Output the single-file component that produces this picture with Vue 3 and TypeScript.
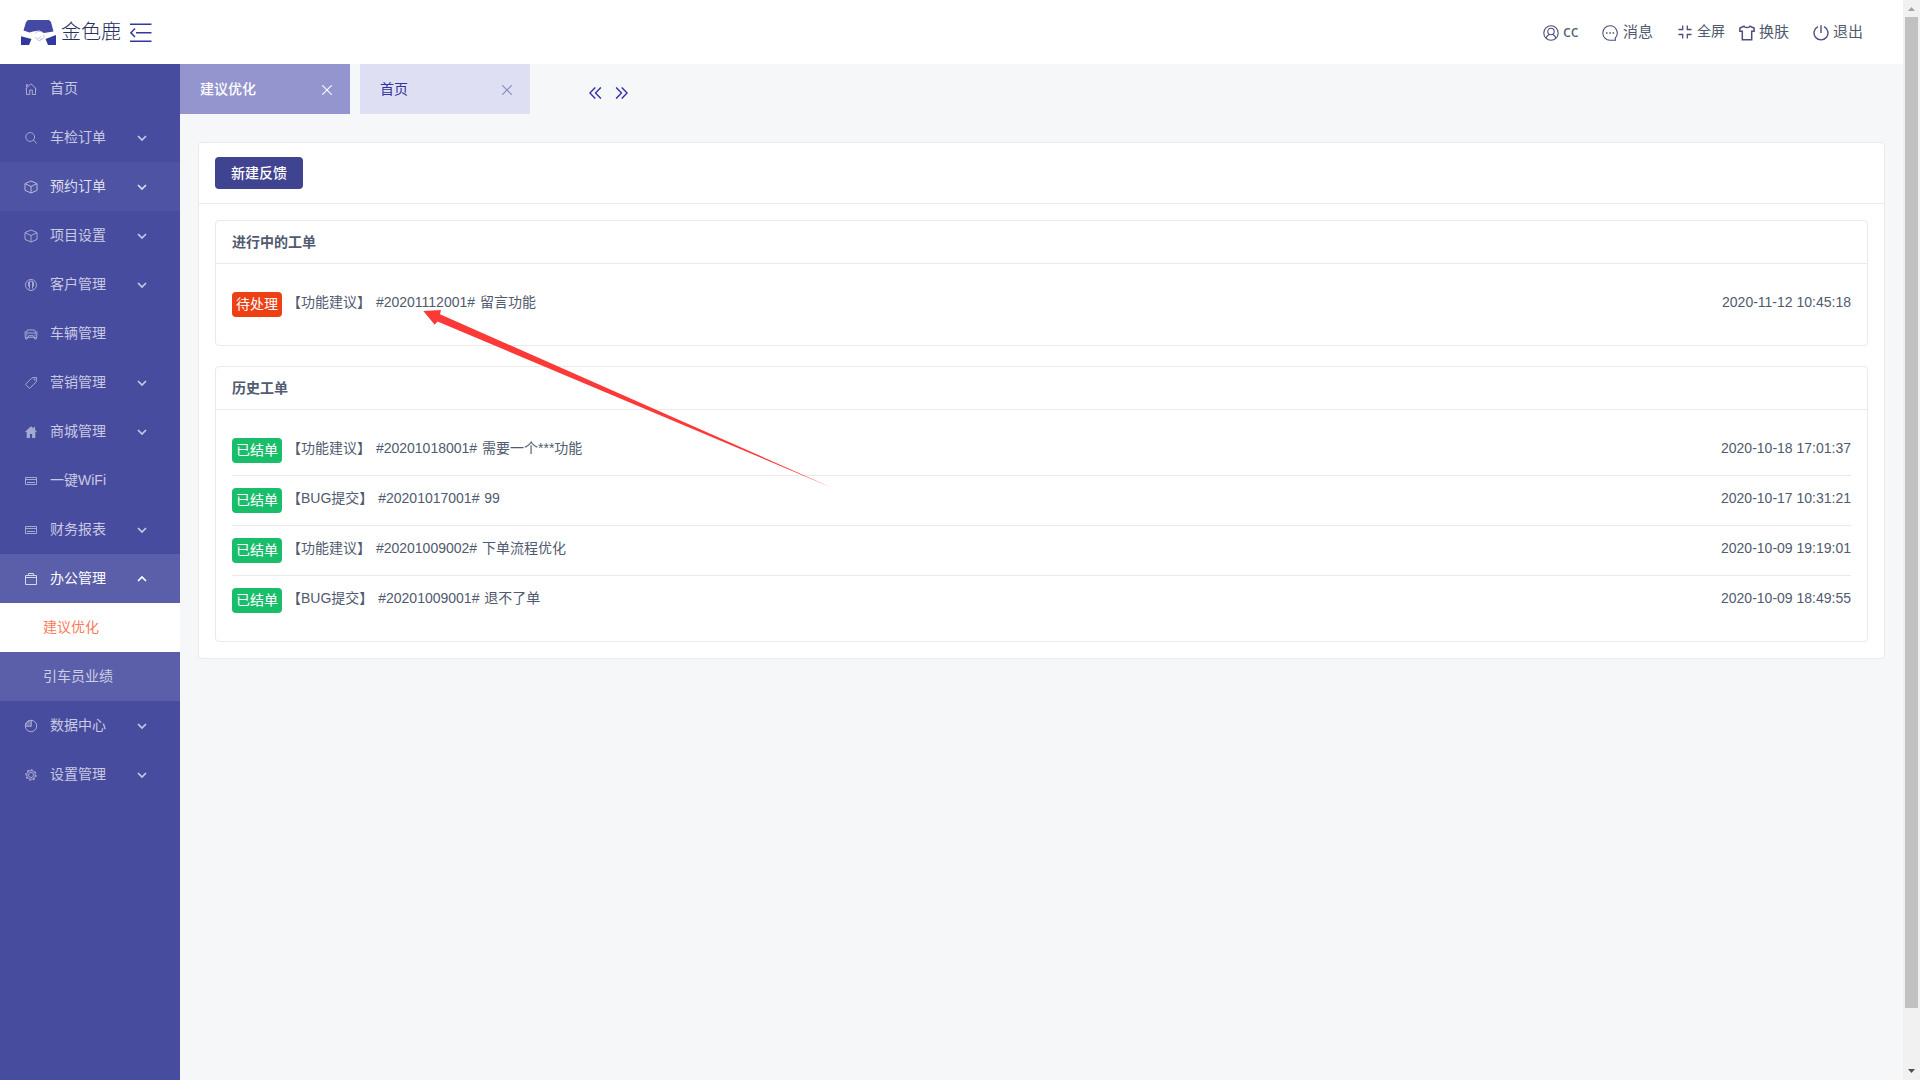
<script setup lang="ts">
interface MenuItem {
  label: string
  icon: string
  expandable?: boolean
  hovered?: boolean
  open?: boolean
  children?: { label: string; active?: boolean }[]
}

interface Ticket {
  id: string
  type: string
  title: string
  status: string
  time: string
}

const icons: Record<string, string> = {
  home: '<path d="M1.500 7 7 1.800 12.500 7M2.500 6v6.500h3.200V8h2.600v4.500h3.200V6M2.500 5V2.500h1.200v1.300"/>',
  search: '<circle cx="6.200" cy="6" r="4.400"/><path d="m9.400 9.200 3.400 3.400"/>',
  cube: '<path d="M7 1 13 3.600v6.800L7 13 1 10.400V3.600zM1 3.600l6 2.900 6-2.900M7 6.500V13"/>',
  customer: '<circle cx="7" cy="7" r="5.500"/><path d="M5.500 3.200v7.300l-1 1M8.500 3.200v7.300l1 1M5.500 3.200h3M4.500 4v4.500M9.500 4v4.500"/>',
  car: '<path d="M2.200 5.800 3.400 3h7.200l1.200 2.800M1.200 6h11.600v4.300H1.200zM.4 5h1.500M12.100 5h1.500M4 10.300l.8-1.600h4.400l.8 1.600M1.700 10.300V12h1.600v-1.500M10.700 10.300V12h1.600v-1.500M2.200 8h1.500M10.300 8h1.500"/>',
  tag: '<path d="M1.500 8.300 8 1.800l4.500-.3-.3 4.500-6.700 6.500z"/><circle cx="10.400" cy="3.600" r=".5"/>',
  shop: '<path fill="currentColor" stroke="none" d="M7 1.300 1.300 6.500l.6.700.8-.5V13h3.200V9h2.200v4h3.200V6.700l.8.500.6-.7-1.600-1.500V2H9.600v1.600z"/>',
  card: '<path d="M1.500 3.500h11v7h-11zM1.500 5.500h11M3 8.500h8"/>',
  bag: '<path d="M1.500 3.500h11v9h-11zM1.500 5.500h11M4.500 3.500v-2h5v2"/>',
  pie: '<circle cx="7" cy="7" r="5.700"/><path fill="currentColor" fill-opacity=".45" d="M7.300 1.300v6H1.400A5.800 5.800 0 0 1 7.300 1.300z"/>',
  gear: '<circle cx="7" cy="7" r="4.300"/><circle cx="7" cy="7" r="2.500"/><path stroke-dasharray="2 1.930" stroke-width="1.200" d="M7 1.900a5.100 5.100 0 1 1-.01 0"/>',
}

const menu: MenuItem[] = [
  { label: '首页', icon: 'home' },
  { label: '车检订单', icon: 'search', expandable: true },
  { label: '预约订单', icon: 'cube', expandable: true, hovered: true },
  { label: '项目设置', icon: 'cube', expandable: true },
  { label: '客户管理', icon: 'customer', expandable: true },
  { label: '车辆管理', icon: 'car' },
  { label: '营销管理', icon: 'tag', expandable: true },
  { label: '商城管理', icon: 'shop', expandable: true },
  { label: '一键WiFi', icon: 'card' },
  { label: '财务报表', icon: 'card', expandable: true },
  {
    label: '办公管理',
    icon: 'bag',
    expandable: true,
    open: true,
    children: [{ label: '建议优化', active: true }, { label: '引车员业绩' }],
  },
  { label: '数据中心', icon: 'pie', expandable: true },
  { label: '设置管理', icon: 'gear', expandable: true },
]

const tabs = [
  { label: '建议优化', active: true },
  { label: '首页', active: false },
]

const groups: { title: string; tone: string; tickets: Ticket[] }[] = [
  {
    title: '进行中的工单',
    tone: 'pending',
    tickets: [
      { id: '20201112001', type: '功能建议', title: '留言功能', status: '待处理', time: '2020-11-12 10:45:18' },
    ],
  },
  {
    title: '历史工单',
    tone: 'closed',
    tickets: [
      { id: '20201018001', type: '功能建议', title: '需要一个***功能', status: '已结单', time: '2020-10-18 17:01:37' },
      { id: '20201017001', type: 'BUG提交', title: '99', status: '已结单', time: '2020-10-17 10:31:21' },
      { id: '20201009002', type: '功能建议', title: '下单流程优化', status: '已结单', time: '2020-10-09 19:19:01' },
      { id: '20201009001', type: 'BUG提交', title: '退不了单', status: '已结单', time: '2020-10-09 18:49:55' },
    ],
  },
]
</script>

<template>
  <div class="app">
    <div class="screen">
      <header class="topbar">
        <svg class="logo" width="35" height="25" viewBox="0 0 35 25">
          <path fill="#444aa3" d="M7 0h21l2 2 2.500 9.500-9.500 1.500L18 10.500l-6 1-3.500 1L2.500 10.500 5 2z" />
          <path fill="#3238a2" d="M0 16.300 10.500 19 8 25H0zM35 15 24.500 19 27 25H35z" />
          <path fill="none" stroke="#c3c5e4" d="M14 13.500c2-2.500 6-3 8-.5M14 17c2 2.500 3.500 4.500 6 3s3.500-2 3-5M16 19.500l4-3M18 21l3-3" />
        </svg>
        <span class="brand">金色鹿</span>
        <svg class="fold" width="22" height="20" viewBox="0 0 22 20" fill="none" stroke="#3537a0" stroke-width="1.500">
          <path d="M0 1.300h21.500M6 9.800h15.500M0 18.200h21.500M5 5.500.9 9.800 5 14" />
        </svg>
        <nav class="actions">
          <a class="act user">
            <svg width="16" height="16" viewBox="0 0 16 16"><circle cx="8" cy="8" r="7.200" /><circle cx="8" cy="6.500" r="3.200" /><path d="M3.200 13c.5-2 1.500-3 3.200-3.800M12.800 13c-.5-2-1.500-3-3.200-3.800" /></svg>
            <span>cc</span>
          </a>
          <a class="act message">
            <svg width="16" height="16" viewBox="0 0 16 16"><path d="M8 .8a7.200 7.200 0 1 0 0 14.400h5.500l-.3-2.200A7.200 7.200 0 0 0 8 .8z" /><path d="M4 8h1.500M7.300 8h1.500M10.600 8h1.500" stroke-width="1.600" /></svg>
            <span>消息</span>
          </a>
          <a class="act full">
            <svg width="14" height="14" viewBox="0 0 14 14"><path d="M4.700 .5v4H.5M9.300 .5v4h4.200M.5 9.500h4.200v4M13.500 9.500H9.300v4" /></svg>
            <span>全屏</span>
          </a>
          <a class="act skin">
            <svg width="16" height="16" viewBox="0 0 16 16"><path d="M5 1.200.9 3v3.300h2.400v8.500h9.400V6.300h2.400V3L11 1.200C10.300 3 5.700 3 5 1.200z" stroke-width="1.500" /></svg>
            <span>换肤</span>
          </a>
          <a class="act exit">
            <svg width="16" height="16" viewBox="0 0 16 16"><path d="M5 1.600a7 7 0 1 0 6 0M8 .3v7.700" stroke-width="1.400" /></svg>
            <span>退出</span>
          </a>
        </nav>
      </header>

      <div class="body">
        <aside class="sidebar">
          <template v-for="item in menu" :key="item.label">
            <div class="item" :class="{ hovered: item.hovered, open: item.open }">
              <svg class="item-icon" width="14" height="14" viewBox="0 0 14 14" v-html="icons[item.icon]"></svg>
              <span class="item-label">{{ item.label }}</span>
              <svg v-if="item.expandable" class="caret" width="10" height="6" viewBox="0 0 10 6">
                <path :d="item.open ? 'M1 5l4-4 4 4' : 'M1 1l4 4 4-4'" />
              </svg>
            </div>
            <div v-for="child in item.children" :key="child.label" class="child" :class="{ active: child.active }">
              {{ child.label }}
            </div>
          </template>
        </aside>

        <main class="main">
          <div class="tabs">
            <div v-for="tab in tabs" :key="tab.label" class="tab" :class="{ active: tab.active }">
              <span>{{ tab.label }}</span>
              <svg width="10" height="10" viewBox="0 0 10 10"><path d="M.3.3l9.400 9.400M9.700.3.3 9.700" /></svg>
            </div>
            <div class="pager">
              <svg width="13" height="12" viewBox="0 0 13 12"><path d="M6.300.4.9 6l5.400 5.600M11.900.4 6.500 6l5.400 5.600" /></svg>
              <svg width="13" height="12" viewBox="0 0 13 12"><path d="M1.100.4 6.500 6l-5.400 5.600M6.700.4 12.100 6l-5.400 5.600" /></svg>
            </div>
          </div>

          <section class="card">
            <div class="card-head"><button class="create">新建反馈</button></div>
            <div class="card-body">
              <div v-for="group in groups" :key="group.title" class="panel">
                <h3 class="panel-head">{{ group.title }}</h3>
                <div class="panel-body">
                  <div v-for="t in group.tickets" :key="t.id" class="row">
                    <span class="badge" :class="group.tone">{{ t.status }}</span>
                    <span class="desc">【{{ t.type }}】 #{{ t.id }}# {{ t.title }}</span>
                    <time class="time">{{ t.time }}</time>
                  </div>
                </div>
              </div>
            </div>
          </section>
        </main>
      </div>
    </div>

    <div class="scrollbar">
      <svg class="sb-arrow" width="17" height="17" viewBox="0 0 17 17"><path fill="#a3a3a3" d="M5 11h7L8.500 7z" /></svg>
      <div class="thumb"></div>
      <svg class="sb-arrow" width="17" height="17" viewBox="0 0 17 17"><path fill="#505050" d="M5 6h7l-3.500 4z" /></svg>
    </div>

    <svg class="pointer" width="412" height="180" viewBox="0 0 412 180">
      <path fill="#fb3a38" d="M.3 1 18 0l-1 4.200L409 177.700 14.500 11.500 11.700 14.800z" />
    </svg>
  </div>
</template>

<style>
html,
body {
  height: 100%;
  overflow: hidden;
}
</style>

<style scoped>
.app {
  display: flex;
  position: relative;
  height: 100vh;
  color: #515a6e;
  font: 14px/21px 'Liberation Sans', 'Noto Sans CJK SC', sans-serif;
  text-spacing-trim: space-all;
}
.app * {
  box-sizing: border-box;
}
.screen {
  flex: 1;
  display: flex;
  flex-direction: column;
  background: #f5f7f9;
}
.topbar {
  display: flex;
  align-items: center;
  height: 64px;
  padding-left: 21px;
  background: #fff;
}
.brand {
  margin: 0 9px 0 5px;
  width: 60px;
  color: #2b3060;
  font-size: 20px;
  font-weight: 300;
  white-space: nowrap;
}
.fold {
  margin-top: 1px;
}
.actions {
  display: flex;
  align-items: center;
  margin-left: auto;
  padding-right: 40px;
}
.act {
  display: flex;
  align-items: center;
  color: #515a6e;
  font-size: 15px;
}
.act span {
  margin-bottom: 1px;
}
.act svg {
  margin-right: 5px;
  margin-top: 2px;
  fill: none;
  stroke: #4a4e7c;
  stroke-width: 1.1;
}
.act.user svg {
  margin-right: 4px;
}
.act.user span {
  width: 15px;
  font-family: 'Noto Sans', sans-serif;
  font-size: 16px;
}
.act.message {
  margin-left: 24px;
}
.act.full {
  margin-left: 25px;
  font-size: 14px;
}
.act.full svg {
  margin-top: -1px;
  stroke-width: 1.300;
}
.act.skin {
  margin-left: 14px;
}
.act.skin svg {
  margin-right: 4px;
}
.act.exit {
  margin-left: 24px;
}
.act.exit svg {
  margin-right: 4px;
}
.body {
  flex: 1;
  display: flex;
}
.sidebar {
  width: 180px;
  background: #484c9f;
}
.item {
  display: flex;
  align-items: center;
  height: 49px;
  padding-left: 24px;
  color: #c8c9e2;
}
.item.hovered {
  background: #4f53a3;
  color: #dedfee;
}
.item.open {
  background: #5b5faa;
  color: #fff;
}
.item-icon {
  margin: 1px 12px 0 0;
  fill: none;
  stroke: currentColor;
  stroke-width: 1;
  opacity: 0.75;
}
.item-label {
  width: 87px;
  margin-bottom: 1px;
}
.caret {
  fill: none;
  stroke: currentColor;
  stroke-width: 1.700;
}
.child {
  height: 49px;
  padding-left: 43px;
  background: #5b5faa;
  color: #cdcee5;
  line-height: 48px;
}
.child.active {
  background: #fff;
  color: #fb7a5c;
}
.main {
  flex: 1;
  display: flex;
  flex-direction: column;
}
.tabs {
  display: flex;
  gap: 10px;
  height: 50px;
}
.tab {
  display: flex;
  align-items: center;
  justify-content: space-between;
  width: 170px;
  padding: 0 18px 0 20px;
  background: #dfdff3;
  color: #3432a0;
}
.tab svg {
  margin-top: 2px;
  fill: none;
  stroke: #8587bd;
  stroke-width: 1.100;
}
.tab.active {
  background: #9495ce;
  color: #fff;
  font-weight: 500;
}
.tab.active svg {
  stroke: #fff;
}
.pager {
  display: flex;
  align-items: center;
  gap: 13px;
  margin: 8px 0 0 49px;
}
.pager svg {
  fill: none;
  stroke: #3634a2;
  stroke-width: 1.400;
}
.card {
  margin: 28px 18px 0;
  border: 1px solid #e8eaec;
  border-radius: 4px;
  background: #fff;
}
.card-head {
  height: 61px;
  padding: 14px 16px;
  border-bottom: 1px solid #e8eaec;
}
.create {
  display: block;
  width: 88px;
  height: 32px;
  padding: 0;
  border: 0;
  border-radius: 4px;
  background: #40438f;
  color: #fff;
  font: inherit;
  font-weight: 500;
}
.card-body {
  display: flex;
  flex-direction: column;
  gap: 20px;
  padding: 16px;
}
.panel {
  border: 1px solid #e8eaec;
  border-radius: 4px;
}
.panel-head {
  height: 43px;
  margin: 0;
  padding: 0 16px;
  border-bottom: 1px solid #e8eaec;
  font-size: 14px;
  font-weight: 600;
  line-height: 42px;
}
.panel-body {
  padding: 16px;
}
.row {
  display: flex;
  align-items: center;
  padding: 12px 0;
  border-bottom: 1px solid #e8eaec;
}
.row:last-child {
  border-bottom: 0;
}
.badge {
  width: 50px;
  height: 25px;
  margin-right: 5px;
  border-radius: 4px;
  color: #fff;
  line-height: 24px;
  text-align: center;
}
.badge.pending {
  background: #ed4014;
}
.badge.closed {
  background: #19be6b;
}
.desc,
.time {
  margin-bottom: 4px;
}
.desc {
  word-spacing: 1px;
}
.time {
  margin-left: auto;
}
.scrollbar {
  display: flex;
  flex-direction: column;
  width: 17px;
  background: #f1f1f1;
}
.thumb {
  height: 991px;
  margin: 0 2px;
  background: #c1c1c1;
}
.sb-arrow:last-child {
  margin-top: auto;
}
.pointer {
  position: absolute;
  left: 423px;
  top: 310px;
}
</style>
